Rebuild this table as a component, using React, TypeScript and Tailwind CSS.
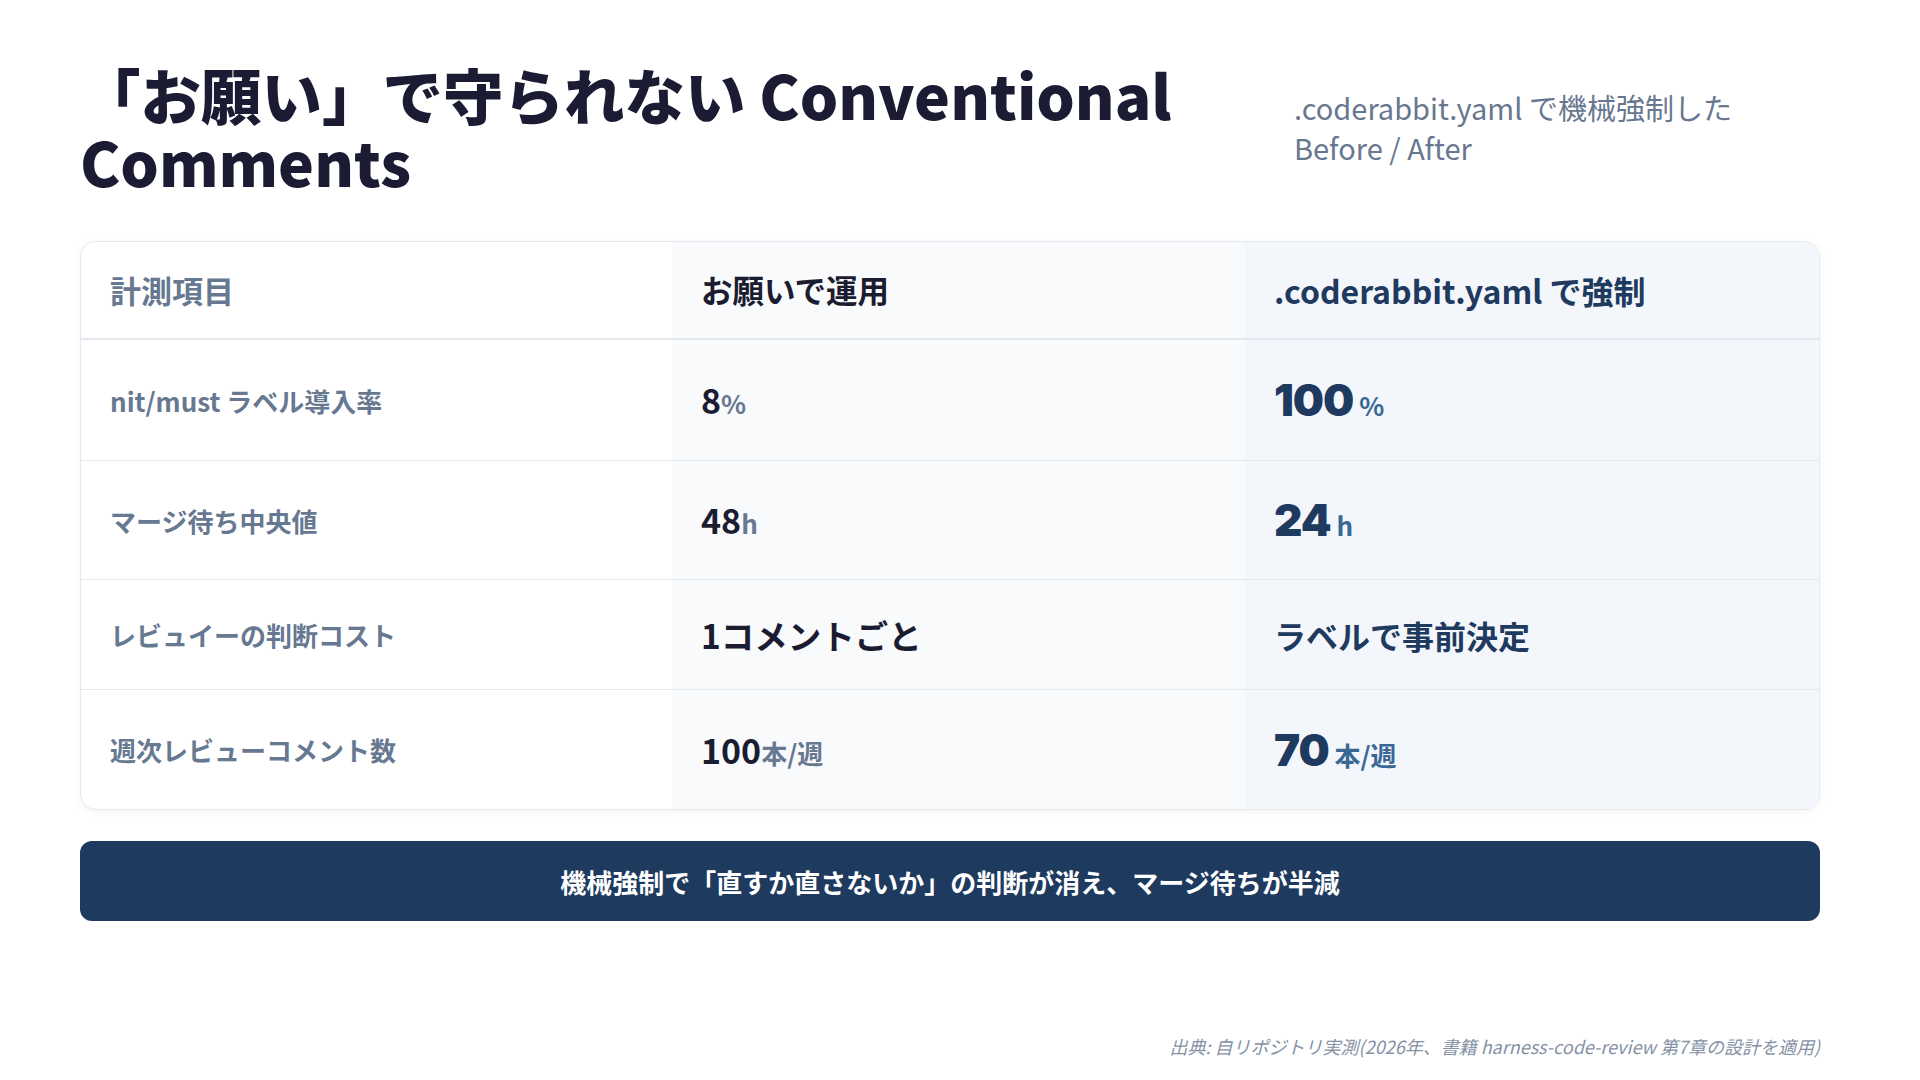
const jp = "font-['Noto_Sans_CJK_JP','Noto_Sans',sans-serif]";

type Val = { num: string; unit?: string; text?: boolean };

const rows: { label: string; before: Val; after: Val; h: string }[] = [
  { label: "nit/must ラベル導入率", before: { num: "8", unit: "%" }, after: { num: "100", unit: "%" }, h: "h-[121px]" },
  { label: "マージ待ち中央値", before: { num: "48", unit: "h" }, after: { num: "24", unit: "h" }, h: "h-[119px]" },
  { label: "レビュイーの判断コスト", before: { num: "1コメントごと", text: true }, after: { num: "ラベルで事前決定", text: true }, h: "h-[110px]" },
  { label: "週次レビューコメント数", before: { num: "100", unit: "本/週" }, after: { num: "70", unit: "本/週" }, h: "h-[119px]" },
];

function Before({ v }: { v: Val }) {
  if (v.text) {
    return <span className="text-[33.5px] font-bold leading-none text-[#1b1c30]">{v.num}</span>;
  }
  return (
    <span className="flex items-baseline leading-none">
      <span className="text-[34px] font-bold text-[#1b1c30]">{v.num}</span>
      <span className="text-[26px] font-semibold text-[#677891]">{v.unit}</span>
    </span>
  );
}

function After({ v }: { v: Val }) {
  if (v.text) {
    return <span className="text-[32px] font-bold leading-none text-[#1e3a5f]">{v.num}</span>;
  }
  return (
    <span className="flex items-baseline leading-none">
      <span className="font-['Inter',sans-serif] text-[44px] font-black tracking-tight text-[#1e3a5f]">{v.num}</span>
      <span className="ml-[6px] text-[26px] font-bold text-[#3a6896]">{v.unit}</span>
    </span>
  );
}

export default function App() {
  return (
    <div className={`${jp} flex h-[1080px] w-[1920px] flex-col bg-white pl-[80px] pr-[100px] pt-[60px]`}>
      <header className="flex items-center gap-[48px]">
        <h1 className="flex-1 text-[60.5px] font-black leading-[67px] text-[#1b1c33]">
          「お願い」で守られない Conventional Comments
        </h1>
        <div className="w-[526px] text-[29px] leading-[40px] text-[#687790]">
          <div>.coderabbit.yaml で機械強制した</div>
          <div>Before / After</div>
        </div>
      </header>

      <div className="mt-[47px] overflow-hidden rounded-[16px] border border-[#e5e8ee] bg-white shadow-[0_2px_8px_rgba(15,23,42,0.05)]">
        <div className="grid grid-cols-[591px_573px_1fr]">
          <div className="flex h-[98px] items-center border-b-2 border-[#e3e7ee] px-[29px] text-[31px] font-bold text-[#677891]">計測項目</div>
          <div className="flex h-[98px] items-center border-b-2 border-[#e3e7ee] bg-[#f8fafc] px-[29px] text-[31.5px] font-bold text-[#1b1c30]">お願いで運用</div>
          <div className="flex h-[98px] items-center border-b-2 border-[#e3e7ee] bg-[#f3f6fa] px-[29px] text-[32px] font-bold text-[#1e3a5f]">.coderabbit.yaml で強制</div>
          {rows.map((r, i) => {
            const b = i < rows.length - 1 ? "border-b border-[#e5e8ee]" : "";
            return (
              <div key={r.label} className="contents">
                <div className={`flex ${r.h} items-center ${b} px-[29px] text-[26px] font-bold text-[#677891]`}>{r.label}</div>
                <div className={`flex ${r.h} items-center ${b} bg-[#f8fafc] px-[29px]`}>
                  <Before v={r.before} />
                </div>
                <div className={`flex ${r.h} items-center ${b} bg-[#f3f6fa] px-[29px]`}>
                  <After v={r.after} />
                </div>
              </div>
            );
          })}
        </div>
      </div>

      <div className="mt-[31px] flex h-[80px] items-center justify-center rounded-[12px] bg-[#1f3a5f] text-[26px] font-bold text-white">
        機械強制で「直すか直さないか」の判断が消え、マージ待ちが半減
      </div>

      <div className="mt-auto pb-[20px] text-right text-[18px] italic text-[#8592a6]">
        出典: 自リポジトリ実測(2026年、書籍 harness-code-review 第7章の設計を適用)
      </div>
    </div>
  );
}
